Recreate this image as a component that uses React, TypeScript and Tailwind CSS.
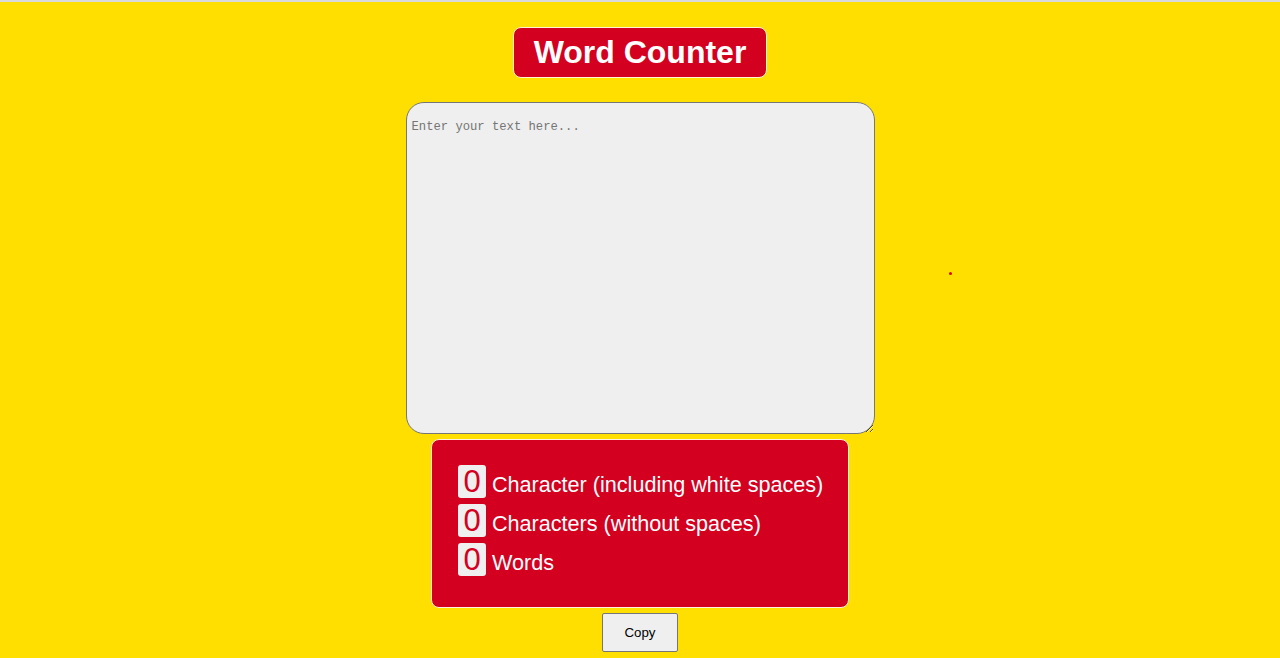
import React, { useState } from "react";

const App = () => {
  const [text, setText] = useState("");

  const withSpaces = text.length;
  const withoutSpaces = text.replace(/\s/g, "").length;
  const words = text.trim() === "" ? 0 : text.trim().split(/\s+/).length;

  const stats = [
    { value: withSpaces, label: "Character (including white spaces)" },
    { value: withoutSpaces, label: "Characters (without spaces)" },
    { value: words, label: "Words" },
  ];

  return (
    <div
      className="relative min-h-[658px] bg-[#ffdf00] border-t-2 border-[#d9d9d9] flex flex-col items-center"
      style={{ fontFamily: '"Liberation Sans", Arial, sans-serif' }}
    >
      {/* Title */}
      <h1 className="mt-[25px] px-[20px] py-[6px] bg-[#d4001f] border border-[#fff6d0] rounded-lg text-white text-[32px] leading-[37px] font-bold">
        Word Counter
      </h1>

      {/* Input */}
      <textarea
        value={text}
        onChange={(e) => setText(e.target.value)}
        placeholder="Enter your text here..."
        className="mt-[24px] w-[469px] h-[332px] bg-[#efefef] border border-[#767676] rounded-[18px] p-[5px] pt-[16px] text-[12.2px] leading-[16px] text-black placeholder:text-[#757575] outline-none"
        style={{ fontFamily: '"Liberation Mono", "Courier New", monospace' }}
      />

      {/* Stats */}
      <div className="mt-[5px] w-[418px] h-[169px] bg-[#d4001f] border border-[#fff0e0] rounded-lg pl-[26px] pt-[25px] flex flex-col gap-[6px]">
        {stats.map((s, i) => (
          <div key={i} className="flex items-start gap-[6px]">
            <span className="w-[28px] h-[33px] bg-[#efefef] rounded-[3px] flex items-center justify-center text-[#d4001f] text-[31px] leading-none">
              {s.value}
            </span>
            <span className="text-white text-[21.6px] leading-[26px] pt-[7px]">{s.label}</span>
          </div>
        ))}
      </div>

      {/* Copy */}
      <button
        onClick={() => navigator.clipboard?.writeText(text)}
        className="mt-[5px] w-[76px] h-[39px] bg-[#efefef] border border-[#767676] rounded-[2px] text-[13.3px] text-black"
      >
        Copy
      </button>

      {/* stray dot */}
      <div className="absolute left-[949px] top-[270px] w-[3px] h-[3px] rounded-full bg-[#e00000]" />
    </div>
  );
};

export default App;
